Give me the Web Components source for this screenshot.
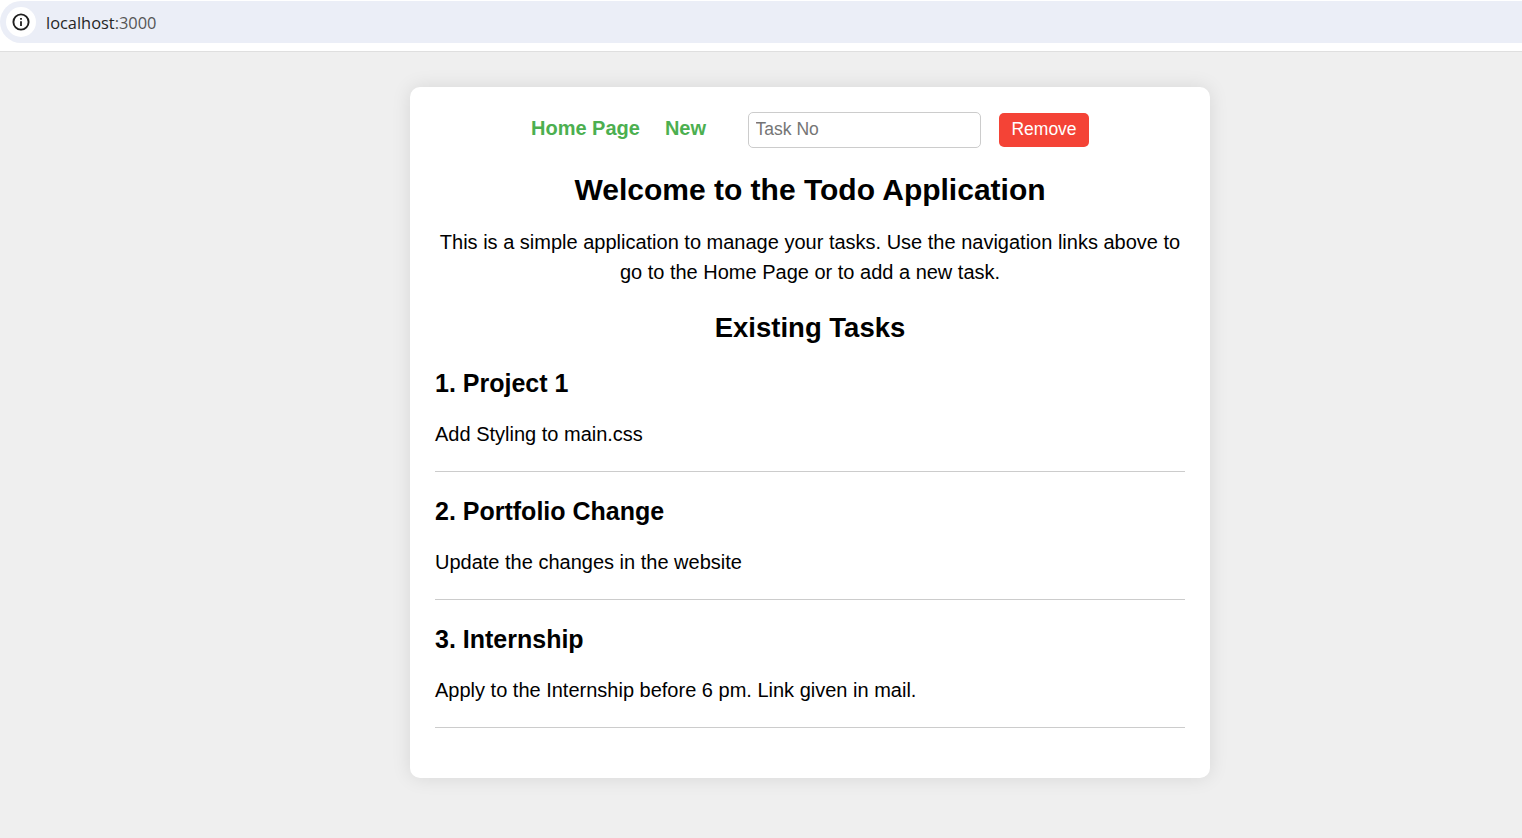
<!DOCTYPE html>
<html lang="en">
<head>
<meta charset="utf-8">
<title>Todo Application</title>
<style>
body{margin:0;min-height:838px;background:#efefef;color:#000;font:20px/30px "Liberation Sans",Arial,sans-serif}
</style>
</head>
<body>
<address-bar host="localhost" port=":3000"></address-bar>
<todo-card>
  <todo-nav slot="nav"></todo-nav>
  <todo-item heading="1. Project 1">Add Styling to main.css</todo-item>
  <todo-item heading="2. Portfolio Change">Update the changes in the website</todo-item>
  <todo-item heading="3. Internship">Apply to the Internship before 6 pm. Link given in mail.</todo-item>
</todo-card>
<script>
class AddressBar extends HTMLElement {
  connectedCallback() {
    this.attachShadow({mode: 'open'}).innerHTML = `
    <style>
      :host{display:block;box-sizing:border-box;height:52px;padding-top:1px;background:#fff;border-bottom:1px solid #dfdfdf}
      .pill{display:flex;align-items:center;box-sizing:border-box;height:42px;padding-left:6px;background:#ebeef7;border-radius:21px 0 0 21px}
      .info{display:flex;align-items:center;justify-content:center;width:30px;height:30px;border-radius:50%;background:#fff}
      .url{margin:2px 0 0 10px;font:400 16.4px/22px "Open Sans","Noto Sans",sans-serif;color:#262626;white-space:nowrap}
      .port{color:#555}
    </style>
    <div class="pill">
      <div class="info"><svg width="18" height="18" viewBox="0 0 18 18"><circle cx="9" cy="9" r="7.6" fill="none" stroke="#1f1f1f" stroke-width="1.9"/><path d="M9 8.2V13" stroke="#1f1f1f" stroke-width="1.8"/><path d="M9 5V6.8" stroke="#1f1f1f" stroke-width="1.8"/></svg></div>
      <div class="url">${this.getAttribute('host')}<span class="port">${this.getAttribute('port')}</span></div>
    </div>`;
  }
}
class TodoNav extends HTMLElement {
  connectedCallback() {
    this.attachShadow({mode: 'open'}).innerHTML = `
    <style>
      :host{display:flex;justify-content:center;align-items:center;height:36px}
      a{color:#4caf50;font-weight:bold;text-decoration:none;line-height:30px;margin:0 25px 4px 0}
      form{display:flex;align-items:center;margin-left:17px}
      input,button{box-sizing:border-box;font:17.5px "Liberation Sans",Arial,sans-serif;border-radius:5px}
      input{width:233px;height:36px;padding:0 6.5px 2px;border:1px solid #ccc;margin:0 18px 0 0;background:#fff}
      input::placeholder{color:#757575}
      button{width:90px;height:34px;padding:0 0 2px;border:0;background:#f44336;color:#fff}
    </style>
    <a>Home Page</a><a>New</a>
    <form><input type="text" placeholder="Task No"><button type="button">Remove</button></form>`;
  }
}
class TodoItem extends HTMLElement {
  connectedCallback() {
    this.attachShadow({mode: 'open'}).innerHTML = `
    <style>
      :host{display:block;box-sizing:border-box;height:128px;border-bottom:1px solid #ccc;padding-top:20px}
      h3{margin:0 0 17px;font-size:25px;line-height:38px}
      p{margin:0}
    </style>
    <h3>${this.getAttribute('heading')}</h3><p><slot></slot></p>`;
  }
}
class TodoCard extends HTMLElement {
  connectedCallback() {
    this.attachShadow({mode: 'open'}).innerHTML = `
    <style>
      :host{display:block;box-sizing:border-box;width:800px;height:691px;margin:35px 0 0 410px;padding:25px;background:#fff;border-radius:10px;box-shadow:0 0 18.75px rgba(0,0,0,.1)}
      h1{margin:19px 0 15px;font-size:30px;line-height:45px;text-align:center}
      h2{margin:20px 0 -4px;font-size:27.5px;line-height:41px;text-align:center}
      p{margin:0;text-align:center}
    </style>
    <slot name="nav"></slot>
    <h1>Welcome to the Todo Application</h1>
    <p>This is a simple application to manage your tasks. Use the navigation links above to go to the Home Page or to add a new task.</p>
    <h2>Existing Tasks</h2>
    <slot></slot>`;
  }
}
customElements.define('address-bar', AddressBar);
customElements.define('todo-nav', TodoNav);
customElements.define('todo-item', TodoItem);
customElements.define('todo-card', TodoCard);
</script>
</body>
</html>
